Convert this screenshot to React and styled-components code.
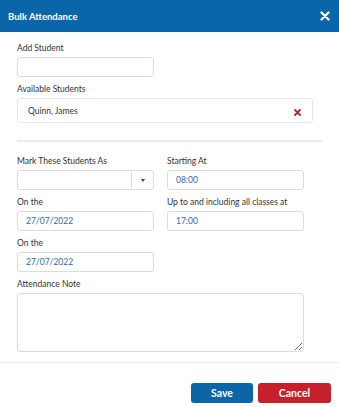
import React from 'react';
import styled, { createGlobalStyle } from 'styled-components';

const GlobalStyle = createGlobalStyle`
	html, body {
		margin: 0;
		padding: 0;
		background: #fff;
	}
	body {
		font-family: Lato, "Open Sans", Arial, sans-serif;
		color: #333;
	}
`;

const Modal = styled.div`
	width: 339px;
	height: 407px;
	background: #fff;
	display: flex;
	flex-direction: column;
	overflow: hidden;
`;

const Header = styled.div`
	height: 32px;
	flex-shrink: 0;
	background: #0b66a9;
	display: flex;
	align-items: center;
	justify-content: space-between;
	padding: 0 9px 0 8px;
	box-sizing: border-box;
`;

const Title = styled.h1`
	margin: 0;
	font-size: 9.5px;
	font-weight: 700;
	color: #fff;
`;

const CloseButton = styled.button`
	border: none;
	background: none;
	padding: 0;
	width: 10px;
	height: 10px;
	display: flex;
	cursor: pointer;
`;

const Body = styled.div`
	padding: 10px 17px 4px 17px;
	border-bottom: 1px solid #ececec;
`;

const Field = styled.div`
	margin-bottom: 6px;
`;

const Label = styled.label`
	display: block;
	font-size: 8.5px;
	line-height: 13px;
	margin-bottom: 2px;
	color: #333;
	white-space: nowrap;
`;

const TextInput = styled.input`
	display: block;
	box-sizing: border-box;
	width: 137px;
	height: 20px;
	border: 1px solid #dcdcdc;
	border-radius: 3px;
	padding: 0 8px;
	font-family: inherit;
	font-size: 8.5px;
	color: #2b6ca9;
	outline: none;
	background: #fff;
`;

const StudentBox = styled.div`
	box-sizing: border-box;
	width: 296px;
	height: 25px;
	border: 1px solid #e6e6e6;
	border-radius: 3px;
	display: flex;
	align-items: center;
	justify-content: space-between;
	padding: 0 11px 0 10px;
	font-size: 8.5px;
	color: #333;
`;

const RemoveIcon = styled.span`
	display: flex;
	margin-top: 3px;
`;

const Divider = styled.hr`
	border: none;
	border-top: 2px solid #ececec;
	margin: 17px 0 13px 0;
`;

const Grid = styled.div`
	display: grid;
	grid-template-columns: 137px 137px;
	column-gap: 13px;
`;

const Select = styled.div`
	box-sizing: border-box;
	width: 137px;
	height: 20px;
	border: 1px solid #dcdcdc;
	border-radius: 3px;
	display: flex;
`;

const SelectValue = styled.div`
	flex: 1;
`;

const SelectArrow = styled.div`
	width: 21px;
	border-left: 1px solid #dcdcdc;
	display: flex;
	align-items: center;
	justify-content: center;
	&::after {
		content: '';
		border-left: 2.5px solid transparent;
		border-right: 2.5px solid transparent;
		border-top: 3px solid #444;
	}
`;

const NoteArea = styled.textarea`
	display: block;
	box-sizing: border-box;
	width: 287px;
	height: 59px;
	border: 1px solid #dcdcdc;
	border-radius: 3px;
	resize: vertical;
	font-family: inherit;
	font-size: 8.5px;
	outline: none;
`;

const Footer = styled.div`
	flex: 1;
	display: flex;
	justify-content: flex-end;
	align-items: flex-start;
	gap: 5px;
	padding: 20px 8px 0 0;
`;

const Button = styled.button`
	height: 20px;
	border: none;
	border-radius: 3px;
	color: #fff;
	font-family: inherit;
	font-size: 10.5px;
	font-weight: 700;
	cursor: pointer;
	padding: 0;
`;

const SaveButton = styled(Button)`
	width: 62px;
	background: #0b66a9;
`;

const CancelButton = styled(Button)`
	width: 73px;
	background: #c8202b;
`;

const App = () => (
	<>
		<GlobalStyle />
		<Modal>
			<Header>
				<Title>Bulk Attendance</Title>
				<CloseButton aria-label="Close">
					<svg width="10" height="10" viewBox="0 0 10 10">
						<path d="M1.5 1.5 L8.5 8.5 M8.5 1.5 L1.5 8.5" stroke="#fff" strokeWidth="2.2" strokeLinecap="round" />
					</svg>
				</CloseButton>
			</Header>
			<Body>
				<Field>
					<Label>Add Student</Label>
					<TextInput />
				</Field>
				<Field>
					<Label>Available Students</Label>
					<StudentBox>
						<span>Quinn, James</span>
						<RemoveIcon>
							<svg width="7" height="7" viewBox="0 0 7 7">
								<path d="M1 1 L6 6 M6 1 L1 6" stroke="#b3262a" strokeWidth="1.8" strokeLinecap="round" />
							</svg>
						</RemoveIcon>
					</StudentBox>
				</Field>
				<Divider />
				<Grid>
					<Field>
						<Label>Mark These Students As</Label>
						<Select>
							<SelectValue />
							<SelectArrow />
						</Select>
					</Field>
					<Field>
						<Label>Starting At</Label>
						<TextInput defaultValue="08:00" />
					</Field>
					<Field>
						<Label>On the</Label>
						<TextInput defaultValue="27/07/2022" />
					</Field>
					<Field>
						<Label>Up to and including all classes at</Label>
						<TextInput defaultValue="17:00" />
					</Field>
					<Field>
						<Label>On the</Label>
						<TextInput defaultValue="27/07/2022" />
					</Field>
				</Grid>
				<Field>
					<Label>Attendance Note</Label>
					<NoteArea />
				</Field>
			</Body>
			<Footer>
				<SaveButton>Save</SaveButton>
				<CancelButton>Cancel</CancelButton>
			</Footer>
		</Modal>
	</>
);

export default App;
